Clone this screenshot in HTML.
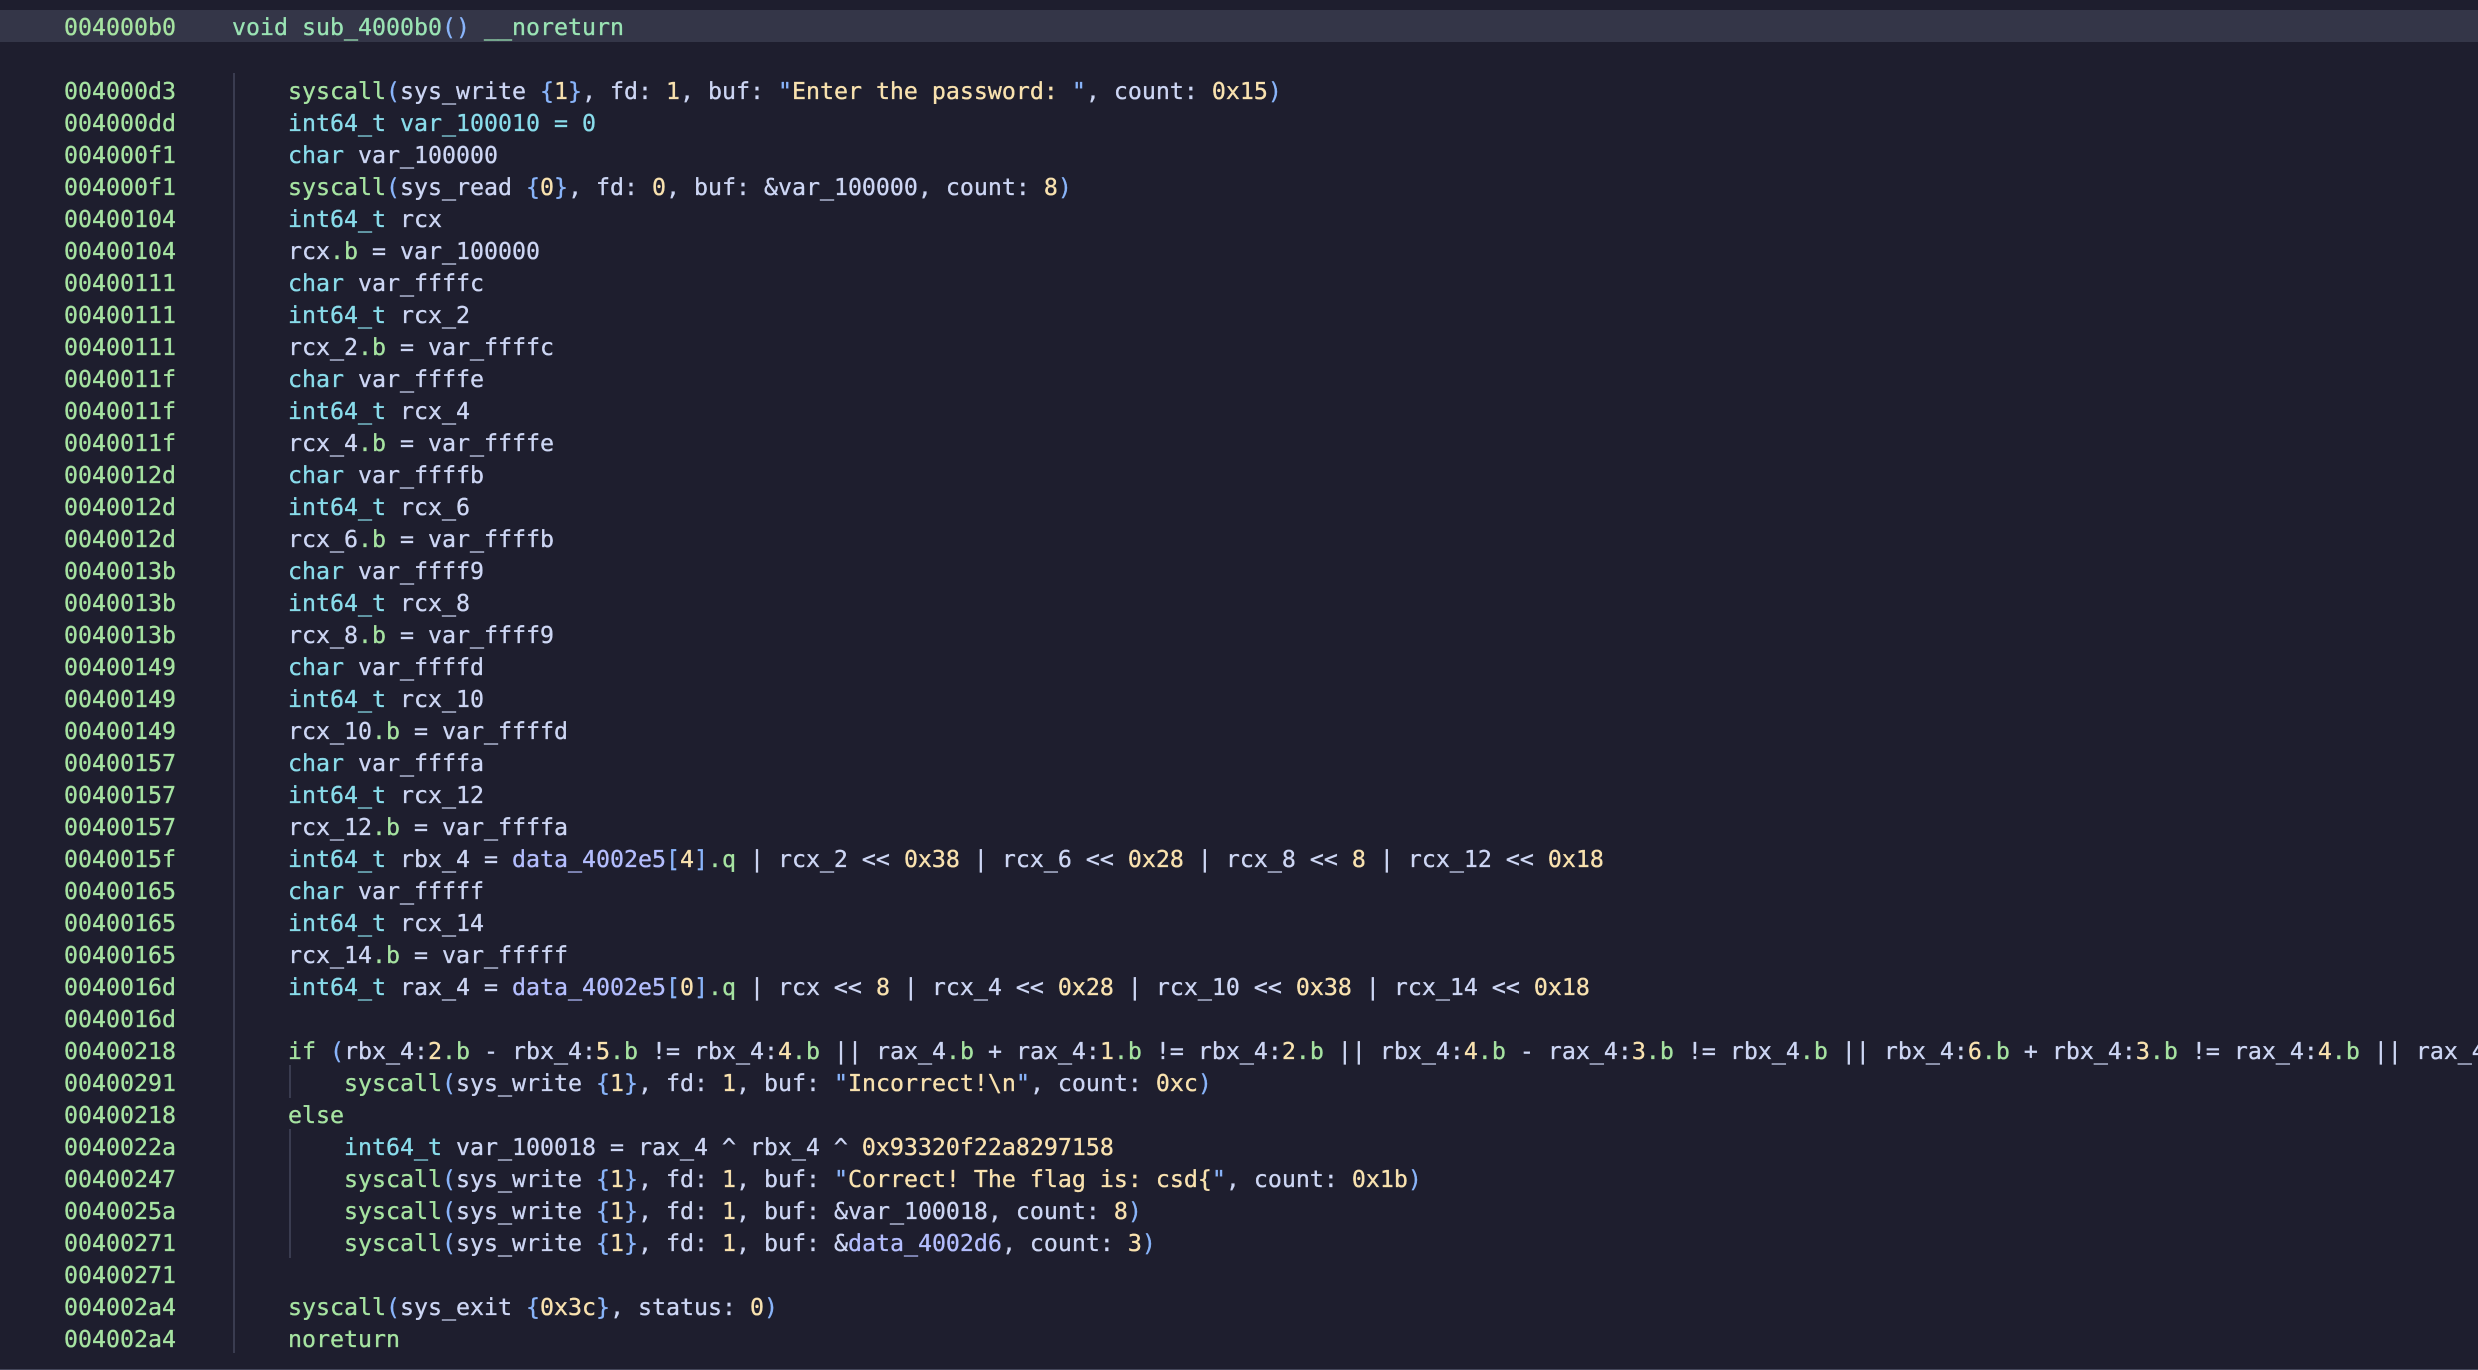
<!DOCTYPE html>
<html><head><meta charset="utf-8"><title>sub_4000b0</title>
<style>
html,body{margin:0;padding:0;width:2478px;height:1370px;overflow:hidden;background:#1e1e2e}
#w{position:relative;width:2478px;height:1370px;overflow:hidden;background:#1e1e2e;font-family:"DejaVu Sans Mono","Liberation Mono",monospace;font-size:23.25px;color:#cdd6f4;text-rendering:geometricPrecision;-webkit-text-stroke:0.3px}
.hl{position:absolute;left:0;top:10px;width:2478px;height:32px;background:#343648}
.ln{position:absolute;background:#3a3c50;width:2px}
.bt{position:absolute;left:0;top:1369px;width:2478px;height:1px;background:#45475a}
.r{position:absolute;white-space:pre;height:32px;line-height:32px}
.a{left:64px;color:#a6e3a1}
.c{left:288px}
.e{left:344px}
i{font-style:normal}
.k{color:#a6e3a1}.t{color:#89dceb}.n{color:#f9e2af}.p{color:#89b4fa}.d{color:#b4befe}.h{color:#9ae3b4}
</style></head><body><div id="w">
<div class="hl"></div>
<div class="ln" style="left:233px;top:73px;height:1280px"></div>
<div class="ln" style="left:289px;top:1065px;height:33px"></div>
<div class="ln" style="left:289px;top:1129px;height:129px"></div>
<div class="bt"></div>

<div class="r a" style="top:12px">004000b0</div><div class="r" style="top:12px;left:232px"><i class="h">void sub_4000b0</i><i class="p">()</i> <i class="h">__noreturn</i></div>

<div class="r a" style="top:76px">004000d3</div><div class="r c" style="top:76px"><i class="k">syscall</i><i class="p">(</i>sys_write <i class="p">{</i><i class="n">1</i><i class="p">}</i>, fd: <i class="n">1</i>, buf: <i class="p">"</i><i class="n">Enter the password: </i><i class="p">"</i>, count: <i class="n">0x15</i><i class="p">)</i></div>
<div class="r a" style="top:108px">004000dd</div><div class="r c t" style="top:108px">int64_t var_100010 = 0</div>
<div class="r a" style="top:140px">004000f1</div><div class="r c" style="top:140px"><i class="t">char</i> var_100000</div>
<div class="r a" style="top:172px">004000f1</div><div class="r c" style="top:172px"><i class="k">syscall</i><i class="p">(</i>sys_read <i class="p">{</i><i class="n">0</i><i class="p">}</i>, fd: <i class="n">0</i>, buf: &amp;var_100000, count: <i class="n">8</i><i class="p">)</i></div>
<div class="r a" style="top:204px">00400104</div><div class="r c" style="top:204px"><i class="t">int64_t</i> rcx</div>
<div class="r a" style="top:236px">00400104</div><div class="r c" style="top:236px">rcx<i class="k">.b</i> = var_100000</div>
<div class="r a" style="top:268px">00400111</div><div class="r c" style="top:268px"><i class="t">char</i> var_ffffc</div>
<div class="r a" style="top:300px">00400111</div><div class="r c" style="top:300px"><i class="t">int64_t</i> rcx_2</div>
<div class="r a" style="top:332px">00400111</div><div class="r c" style="top:332px">rcx_2<i class="k">.b</i> = var_ffffc</div>
<div class="r a" style="top:364px">0040011f</div><div class="r c" style="top:364px"><i class="t">char</i> var_ffffe</div>
<div class="r a" style="top:396px">0040011f</div><div class="r c" style="top:396px"><i class="t">int64_t</i> rcx_4</div>
<div class="r a" style="top:428px">0040011f</div><div class="r c" style="top:428px">rcx_4<i class="k">.b</i> = var_ffffe</div>
<div class="r a" style="top:460px">0040012d</div><div class="r c" style="top:460px"><i class="t">char</i> var_ffffb</div>
<div class="r a" style="top:492px">0040012d</div><div class="r c" style="top:492px"><i class="t">int64_t</i> rcx_6</div>
<div class="r a" style="top:524px">0040012d</div><div class="r c" style="top:524px">rcx_6<i class="k">.b</i> = var_ffffb</div>
<div class="r a" style="top:556px">0040013b</div><div class="r c" style="top:556px"><i class="t">char</i> var_ffff9</div>
<div class="r a" style="top:588px">0040013b</div><div class="r c" style="top:588px"><i class="t">int64_t</i> rcx_8</div>
<div class="r a" style="top:620px">0040013b</div><div class="r c" style="top:620px">rcx_8<i class="k">.b</i> = var_ffff9</div>
<div class="r a" style="top:652px">00400149</div><div class="r c" style="top:652px"><i class="t">char</i> var_ffffd</div>
<div class="r a" style="top:684px">00400149</div><div class="r c" style="top:684px"><i class="t">int64_t</i> rcx_10</div>
<div class="r a" style="top:716px">00400149</div><div class="r c" style="top:716px">rcx_10<i class="k">.b</i> = var_ffffd</div>
<div class="r a" style="top:748px">00400157</div><div class="r c" style="top:748px"><i class="t">char</i> var_ffffa</div>
<div class="r a" style="top:780px">00400157</div><div class="r c" style="top:780px"><i class="t">int64_t</i> rcx_12</div>
<div class="r a" style="top:812px">00400157</div><div class="r c" style="top:812px">rcx_12<i class="k">.b</i> = var_ffffa</div>
<div class="r a" style="top:844px">0040015f</div><div class="r c" style="top:844px"><i class="t">int64_t</i> rbx_4 = <i class="d">data_4002e5</i><i class="p">[</i><i class="n">4</i><i class="p">]</i><i class="k">.q</i> | rcx_2 &lt;&lt; <i class="n">0x38</i> | rcx_6 &lt;&lt; <i class="n">0x28</i> | rcx_8 &lt;&lt; <i class="n">8</i> | rcx_12 &lt;&lt; <i class="n">0x18</i></div>
<div class="r a" style="top:876px">00400165</div><div class="r c" style="top:876px"><i class="t">char</i> var_fffff</div>
<div class="r a" style="top:908px">00400165</div><div class="r c" style="top:908px"><i class="t">int64_t</i> rcx_14</div>
<div class="r a" style="top:940px">00400165</div><div class="r c" style="top:940px">rcx_14<i class="k">.b</i> = var_fffff</div>
<div class="r a" style="top:972px">0040016d</div><div class="r c" style="top:972px"><i class="t">int64_t</i> rax_4 = <i class="d">data_4002e5</i><i class="p">[</i><i class="n">0</i><i class="p">]</i><i class="k">.q</i> | rcx &lt;&lt; <i class="n">8</i> | rcx_4 &lt;&lt; <i class="n">0x28</i> | rcx_10 &lt;&lt; <i class="n">0x38</i> | rcx_14 &lt;&lt; <i class="n">0x18</i></div>
<div class="r a" style="top:1004px">0040016d</div>
<div class="r a" style="top:1036px">00400218</div><div class="r c" style="top:1036px"><i class="k">if</i> <i class="p">(</i>rbx_4:<i class="n">2</i><i class="k">.b</i> - rbx_4:<i class="n">5</i><i class="k">.b</i> != rbx_4:<i class="n">4</i><i class="k">.b</i> || rax_4<i class="k">.b</i> + rax_4:<i class="n">1</i><i class="k">.b</i> != rbx_4:<i class="n">2</i><i class="k">.b</i> || rbx_4:<i class="n">4</i><i class="k">.b</i> - rax_4:<i class="n">3</i><i class="k">.b</i> != rbx_4<i class="k">.b</i> || rbx_4:<i class="n">6</i><i class="k">.b</i> + rbx_4:<i class="n">3</i><i class="k">.b</i> != rax_4:<i class="n">4</i><i class="k">.b</i> || rax_4:<i class="n">2</i><i class="k">.b</i></div>
<div class="r a" style="top:1068px">00400291</div><div class="r e" style="top:1068px"><i class="k">syscall</i><i class="p">(</i>sys_write <i class="p">{</i><i class="n">1</i><i class="p">}</i>, fd: <i class="n">1</i>, buf: <i class="p">"</i><i class="n">Incorrect!\n</i><i class="p">"</i>, count: <i class="n">0xc</i><i class="p">)</i></div>
<div class="r a" style="top:1100px">00400218</div><div class="r c k" style="top:1100px">else</div>
<div class="r a" style="top:1132px">0040022a</div><div class="r e" style="top:1132px"><i class="t">int64_t</i> var_100018 = rax_4 ^ rbx_4 ^ <i class="n">0x93320f22a8297158</i></div>
<div class="r a" style="top:1164px">00400247</div><div class="r e" style="top:1164px"><i class="k">syscall</i><i class="p">(</i>sys_write <i class="p">{</i><i class="n">1</i><i class="p">}</i>, fd: <i class="n">1</i>, buf: <i class="p">"</i><i class="n">Correct! The flag is: csd{</i><i class="p">"</i>, count: <i class="n">0x1b</i><i class="p">)</i></div>
<div class="r a" style="top:1196px">0040025a</div><div class="r e" style="top:1196px"><i class="k">syscall</i><i class="p">(</i>sys_write <i class="p">{</i><i class="n">1</i><i class="p">}</i>, fd: <i class="n">1</i>, buf: &amp;var_100018, count: <i class="n">8</i><i class="p">)</i></div>
<div class="r a" style="top:1228px">00400271</div><div class="r e" style="top:1228px"><i class="k">syscall</i><i class="p">(</i>sys_write <i class="p">{</i><i class="n">1</i><i class="p">}</i>, fd: <i class="n">1</i>, buf: &amp;<i class="d">data_4002d6</i>, count: <i class="n">3</i><i class="p">)</i></div>
<div class="r a" style="top:1260px">00400271</div>
<div class="r a" style="top:1292px">004002a4</div><div class="r c" style="top:1292px"><i class="k">syscall</i><i class="p">(</i>sys_exit <i class="p">{</i><i class="n">0x3c</i><i class="p">}</i>, status: <i class="n">0</i><i class="p">)</i></div>
<div class="r a" style="top:1324px">004002a4</div><div class="r c k" style="top:1324px">noreturn</div>
</div></body></html>
